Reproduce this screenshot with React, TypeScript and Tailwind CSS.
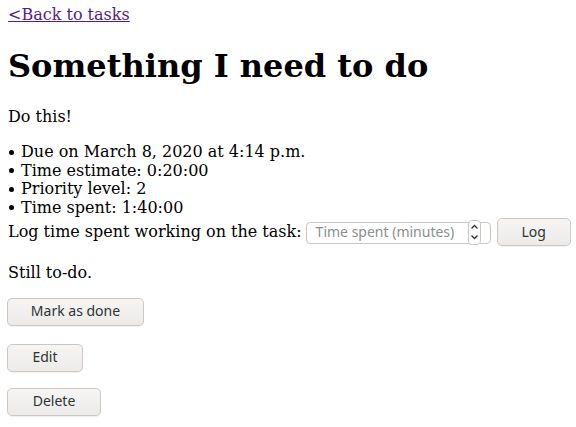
import React from "react";

const btn =
  "h-[28px] rounded-[5px] border border-[#cdc7c2] bg-gradient-to-b from-[#f6f5f4] to-[#edebe9] text-[14px] text-[#2e3436] flex items-center justify-center shadow-[0_1px_0_rgba(0,0,0,0.05)] shrink-0";

const sans = { fontFamily: '"Noto Sans", sans-serif' };

function Item({ children }: { children: React.ReactNode }) {
  return (
    <li className="flex items-center h-[18.5px]">
      <span className="inline-flex w-[13px] shrink-0 items-center">
        <span className="block w-[5px] h-[5px] rounded-full bg-black ml-[1px]" />
      </span>
      <span>{children}</span>
    </li>
  );
}

export default function App() {
  return (
    <div
      className="px-2 pt-[6px] text-[16px] leading-[18.5px] text-black bg-white min-h-[427px]"
      style={{ fontFamily: '"DejaVu Serif", serif' }}
    >
      <div>
        <a href="#" className="text-[#551a8b] underline">
          &lt;Back to tasks
        </a>
      </div>
      <h1 className="text-[32px] font-bold leading-[37px] mt-[23.5px] mb-[22.5px]">
        Something I need to do
      </h1>
      <p>Do this!</p>
      <ul className="mt-[17px]">
        <Item>Due on March 8, 2020 at 4:14 p.m.</Item>
        <Item>Time estimate: 0:20:00</Item>
        <Item>Priority level: 2</Item>
        <Item>Time spent: 1:40:00</Item>
      </ul>
      <div className="flex items-center h-[30px] whitespace-nowrap">
        <span className="shrink-0">Log time spent working on the task:</span>
        <div className="ml-[4px] relative w-[185px] shrink-0 h-[22px] rounded-[4px] border border-[#cdc7c2] bg-white flex items-center mt-[1px]">
          <span className="pl-[9px] text-[14px] text-[#8b8e8f]" style={sans}>
            Time spent (minutes)
          </span>
          <div className="absolute right-[9px] top-[-3px] w-[13px] h-[25px] rounded-[4px] border border-[#cdc7c2] bg-white flex flex-col items-center justify-center">
            <svg width="9" height="6" viewBox="0 0 9 6" className="mb-[4px]">
              <path d="M1.5 4.5 L4.5 1.5 L7.5 4.5" fill="none" stroke="#2e3436" strokeWidth="1.3" />
            </svg>
            <svg width="9" height="6" viewBox="0 0 9 6">
              <path d="M1.5 1.5 L4.5 4.5 L7.5 1.5" fill="none" stroke="#2e3436" strokeWidth="1.3" />
            </svg>
          </div>
        </div>
        <button className={`${btn} ml-[6px] w-[74px]`} style={sans}>
          Log
        </button>
      </div>
      <p className="mt-[17px]">Still to-do.</p>
      <div className="mt-[15px]">
        <button className={`${btn} w-[137px] -ml-[1px]`} style={sans}>
          Mark as done
        </button>
      </div>
      <div className="mt-[18px]">
        <button className={`${btn} w-[76px] -ml-[1px]`} style={sans}>
          Edit
        </button>
      </div>
      <div className="mt-[16px]">
        <button className={`${btn} w-[94px] -ml-[1px]`} style={sans}>
          Delete
        </button>
      </div>
    </div>
  );
}
